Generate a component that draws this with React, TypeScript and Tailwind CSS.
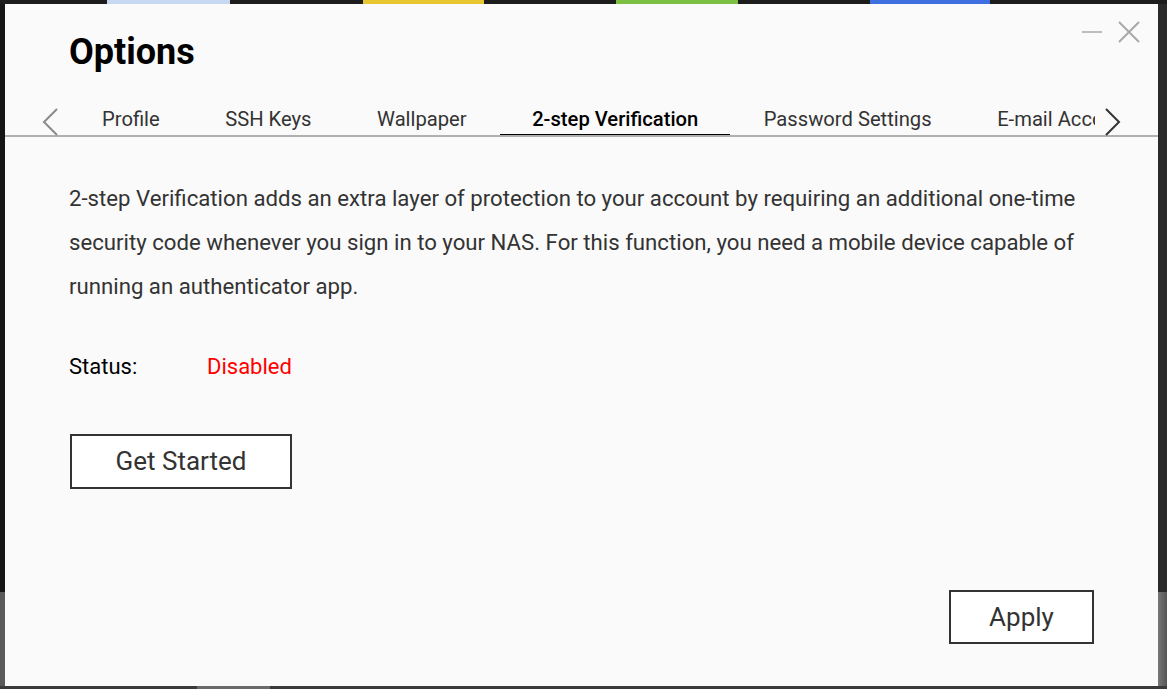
import React from "react";

const tabs = [
	"Profile",
	"SSH Keys",
	"Wallpaper",
	"2-step Verification",
	"Password Settings",
	"E-mail Account",
];

const ACTIVE = "2-step Verification";

const Chevron: React.FC<{ dir: "left" | "right"; color: string }> = ({
	dir,
	color,
}) => (
	<svg width="18" height="28" viewBox="0 0 18 28" fill="none">
		<path
			d={dir === "left" ? "M16 1 L3 14 L16 27" : "M2 1 L15 14 L2 27"}
			stroke={color}
			strokeWidth="2"
		/>
	</svg>
);

export default function App() {
	return (
		<div
			className="w-[1167px] h-[689px] bg-[#262626] flex flex-col overflow-hidden"
			style={{ fontFamily: "Roboto, 'Noto Sans', sans-serif" }}>
			{/* desktop icons peeking above the window */}
			<div className="h-[4px] flex bg-[#1c1c1c]">
				<div className="w-[107px]" />
				<div className="w-[123px] bg-[#c8d8f0]" />
				<div className="w-[133px]" />
				<div className="w-[121px] bg-[#e8c630]" />
				<div className="w-[132px]" />
				<div className="w-[122px] bg-[#7cc043]" />
				<div className="w-[132px]" />
				<div className="w-[120px] bg-[#3d6fe0]" />
			</div>

			<div className="flex flex-1">
				<div className="w-[5px] flex flex-col">
					<div className="h-[588px] bg-[#151515]" />
					<div className="flex-1 bg-[#5a5a5a]" />
				</div>

				{/* window */}
				<div className="w-[1153px] h-[682px] bg-[#fafafa] flex flex-col">
					<div className="flex items-start justify-between h-[96px]">
						<h1 className="pl-[64px] pt-[27px] text-[36px] leading-[42px] font-bold text-black">
							Options
						</h1>
						<div className="flex items-center gap-[15px] pt-[17px] pr-[18px]">
							<svg width="21" height="22" viewBox="0 0 21 22">
								<path d="M0 11 H20" stroke="#bdbdbd" strokeWidth="2" />
							</svg>
							<svg width="22" height="22" viewBox="0 0 22 22">
								<path
									d="M1 1 L21 21 M21 1 L1 21"
									stroke="#a8a8a8"
									strokeWidth="2"
								/>
							</svg>
						</div>
					</div>

					{/* tab strip */}
					<div className="flex items-end h-[37px] border-b-2 border-[#b0b0b0]">
						<div className="w-[65px] h-full flex items-center pl-[36px] pt-[8px]">
							<Chevron dir="left" color="#8a8a8a" />
						</div>
						<div className="flex w-[1025px] overflow-hidden">
							{tabs.map((t) => (
								<div
									key={t}
									className={
										t === ACTIVE
											? "shrink-0 px-8 pt-[2px] h-[35px] flex items-center whitespace-nowrap text-[20.2px] font-medium text-black border-b-[3px] border-black mb-[-2px] mr-[1.5px]"
											: "shrink-0 px-8 pt-[2px] h-[35px] flex items-center whitespace-nowrap text-[20.2px] text-[#333] border-b-[3px] border-transparent mb-[-2px] mr-[1.5px]"
									}>
									{t}
								</div>
							))}
						</div>
						<div className="h-full flex items-center pl-[9px] pt-[8px]">
							<Chevron dir="right" color="#333" />
						</div>
					</div>

					{/* body */}
					<div className="flex flex-col flex-1 pl-[64px] pr-[60px] pt-[39px]">
						<p className="text-[22.2px] leading-[44px] text-[#333]">
							2-step Verification adds an extra layer of protection to your
							account by requiring an additional one-time security code
							whenever you sign in to your NAS. For this function, you need a
							mobile device capable of running an authenticator app.
						</p>
						<div className="flex items-center mt-[45px] text-[22px] leading-[28px]">
							<span className="w-[138px] text-black">Status:</span>
							<span className="text-[#ff0000]">Disabled</span>
						</div>
						<div className="mt-[53px]">
							<button className="ml-[1px] w-[222px] h-[55px] border-2 border-[#333] bg-white text-[26px] text-[#333]">
								Get Started
							</button>
						</div>
						<div className="flex justify-end mt-auto mb-[42px] mr-[4px]">
							<button className="w-[145px] h-[54px] border-2 border-[#333] bg-white text-[26px] text-[#333]">
								Apply
							</button>
						</div>
					</div>
				</div>

				<div className="flex-1 flex flex-col">
					<div className="h-[588px] bg-[#2a2a2a]" />
					<div className="flex-1 bg-gradient-to-r from-[#777] to-[#555]" />
				</div>
			</div>

			<div className="h-[3px] flex bg-[#3a3a3a]">
				<div className="w-[197px]" />
				<div className="w-[73px] bg-[#6a6a6a]" />
			</div>
		</div>
	);
}
